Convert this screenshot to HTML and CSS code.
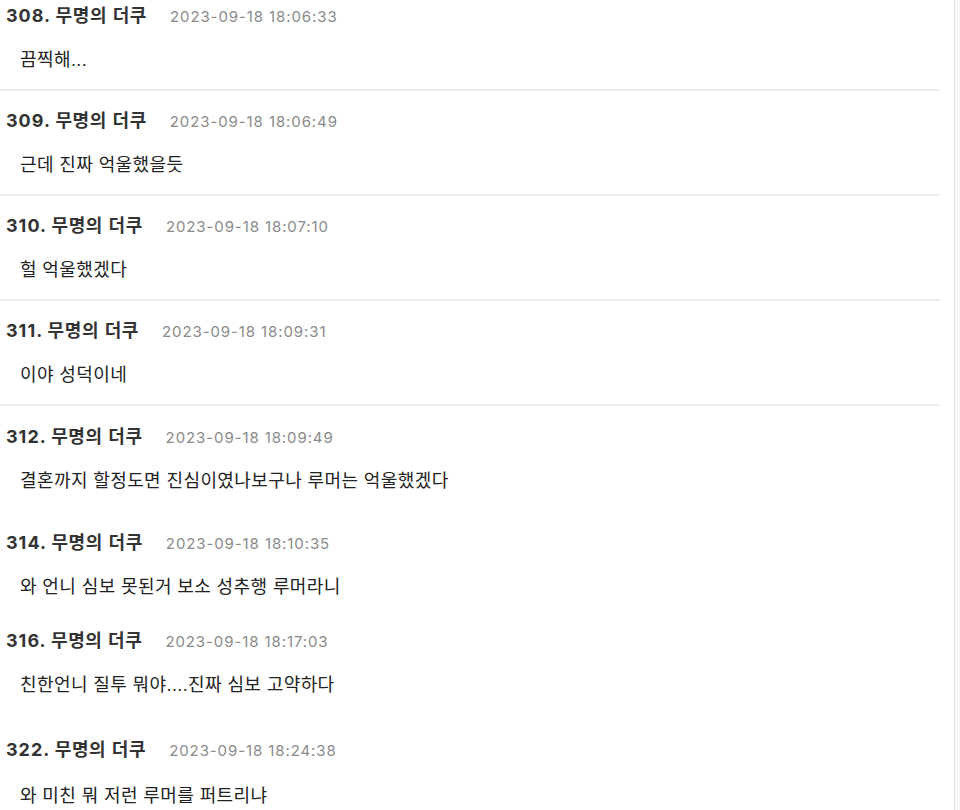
FILE: index.html
```html
<!DOCTYPE html>
<html lang="ko">
<head>
<meta charset="utf-8">
<title>댓글</title>
<link rel="stylesheet" href="styles.css">
</head>
<body>
<div class="page">
  <main class="list">
    <div class="c c--first c--line">
      <div class="c-head"><span class="c-no">308.</span> <span class="c-name">무명의 더쿠</span><span class="c-date">2023-09-18 18:06:33</span></div>
      <div class="c-body">끔찍해...</div>
    </div>
    <div class="c c--line">
      <div class="c-head"><span class="c-no">309.</span> <span class="c-name">무명의 더쿠</span><span class="c-date">2023-09-18 18:06:49</span></div>
      <div class="c-body">근데 진짜 억울했을듯</div>
    </div>
    <div class="c c--line">
      <div class="c-head"><span class="c-no">310.</span> <span class="c-name">무명의 더쿠</span><span class="c-date">2023-09-18 18:07:10</span></div>
      <div class="c-body">헐 억울했겠다</div>
    </div>
    <div class="c c--line">
      <div class="c-head"><span class="c-no">311.</span> <span class="c-name">무명의 더쿠</span><span class="c-date">2023-09-18 18:09:31</span></div>
      <div class="c-body">이야 성덕이네</div>
    </div>
    <div class="c c--312">
      <div class="c-head"><span class="c-no">312.</span> <span class="c-name">무명의 더쿠</span><span class="c-date">2023-09-18 18:09:49</span></div>
      <div class="c-body">결혼까지 할정도면 진심이였나보구나 루머는 억울했겠다</div>
    </div>
    <div class="c c--314">
      <div class="c-head"><span class="c-no">314.</span> <span class="c-name">무명의 더쿠</span><span class="c-date">2023-09-18 18:10:35</span></div>
      <div class="c-body">와 언니 심보 못된거 보소 성추행 루머라니</div>
    </div>
    <div class="c c--316">
      <div class="c-head"><span class="c-no">316.</span> <span class="c-name">무명의 더쿠</span><span class="c-date">2023-09-18 18:17:03</span></div>
      <div class="c-body">친한언니 질투 뭐야....진짜 심보 고약하다</div>
    </div>
    <div class="c c--322">
      <div class="c-head"><span class="c-no">322.</span> <span class="c-name">무명의 더쿠</span><span class="c-date">2023-09-18 18:24:38</span></div>
      <div class="c-body">와 미친 뭐 저런 루머를 퍼트리냐</div>
    </div>
  </main>
  <div class="track"></div>
</div>
</body>
</html>
```

FILE: styles.css
```css
html, body {
  margin: 0;
  padding: 0;
  background: #ffffff;
}

body {
  font-family: "Liberation Sans", "Noto Sans CJK KR", sans-serif;
  color: #222222;
  overflow: hidden;
}

.page {
  display: flex;
  height: 810px;
  overflow: hidden;
}

.list {
  width: 940px;
  flex: 0 0 940px;
}

.track {
  margin-left: 14px;
  flex: 1;
  border-left: 1px solid #e4e4e4;
  background: #f7f7f7;
}

.c {
  padding: 14px 0 17px;
  border-bottom: 2px solid transparent;
}

.c--first {
  margin-top: -14px;
}

.c--line {
  border-bottom-color: #ececec;
}

.c--312 {
  padding-top: 15px;
  padding-bottom: 18px;
}

.c--314 {
  padding-bottom: 10px;
}

.c--316 {
  padding-bottom: 21px;
}

.c--322 .c-body {
  margin-top: 18px;
}

.c-head {
  height: 32px;
  line-height: 32px;
  padding-left: 6px;
  white-space: nowrap;
  color: #333333;
}

.c-no {
  font-family: "Inter", "Liberation Sans", sans-serif;
  font-weight: bold;
  font-size: 18px;
  letter-spacing: 1px;
}

.c-name {
  font-weight: bold;
  font-size: 18px;
  letter-spacing: 0.6px;
}

.c-date {
  margin-left: 23px;
  font-family: "Inter", "Liberation Sans", sans-serif;
  font-size: 15px;
  letter-spacing: 0.9px;
  color: #8a8a8a;
}

.c-body {
  margin-top: 16px;
  height: 24px;
  line-height: 24px;
  padding-left: 20px;
  font-size: 18px;
  letter-spacing: 0.4px;
  color: #222222;
  white-space: nowrap;
}
```
